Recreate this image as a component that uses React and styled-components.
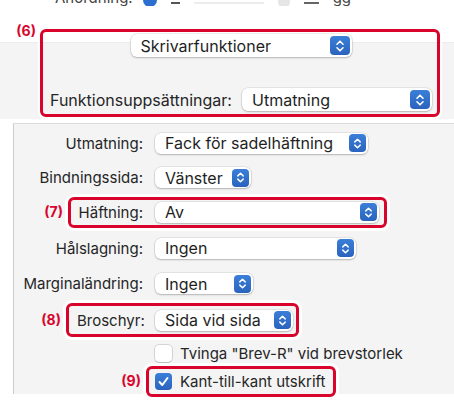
import styled, { createGlobalStyle } from 'styled-components';

const GlobalStyle = createGlobalStyle`
  html, body {
    margin: 0;
    padding: 0;
    background: #ffffff;
  }
  body {
    width: 454px;
    height: 404px;
    overflow: hidden;
    font-family: Inter, "Liberation Sans", sans-serif;
    color: #262626;
  }
`;

const RED = '#d8042c';

function Chevrons ({ size }) {
  return (
    <svg width={size === 'big' ? 10 : 9} height={size === 'big' ? 14 : 13} viewBox="0 0 10 14" fill="none">
      <path d="M2 5.2 L5 2.2 L8 5.2" stroke="#fff" strokeWidth="1.6" strokeLinecap="round" strokeLinejoin="round" />
      <path d="M2 8.8 L5 11.8 L8 8.8" stroke="#fff" strokeWidth="1.6" strokeLinecap="round" strokeLinejoin="round" />
    </svg>
  );
}

function Popup ({ value, width, size, grow }) {
  return (
    <PopupBox $width={width} $size={size} $grow={grow}>
      <PopupText>{value}</PopupText>
      <Stepper $size={size}>
        <Chevrons size={size} />
      </Stepper>
    </PopupBox>
  );
}

function Check ({ checked }) {
  return (
    <CheckBox $checked={checked}>
      {checked && (
        <svg width="13" height="13" viewBox="0 0 13 13" fill="none">
          <path d="M2.5 7 L5.3 10 L10.5 3" stroke="#fff" strokeWidth="2" strokeLinecap="round" strokeLinejoin="round" />
        </svg>
      )}
    </CheckBox>
  );
}

function App () {
  return (
    <Page>
      <GlobalStyle />
      <TopStrip>
        <StripText>Anordning:</StripText>
        <StripRadio />
        <StripIcon $w={9} $c="#555" />
        <StripIcon $w={70} $c="#ececec" />
        <StripDot />
        <StripIcon $w={15} $c="#666" />
        <StripText>gg</StripText>
      </TopStrip>

      <Header>
        <TagCell $w={40} $top>
          <Tag>(6)</Tag>
        </TagCell>
        <TopFrame>
          <CenterRow>
            <Popup value="Skrivarfunktioner" width={221} size="big" />
          </CenterRow>
          <SetRow>
            <SetLabel>Funktionsuppsättningar:</SetLabel>
            <Popup value="Utmatning" size="big" grow />
          </SetRow>
        </TopFrame>
      </Header>

      <Panel>
        <Row $h={38}>
          <Label>Utmatning:</Label>
          <Popup value="Fack för sadelhäftning" width={213} />
        </Row>
        <Row $h={31}>
          <Label>Bindningssida:</Label>
          <Popup value="Vänster" width={96} />
        </Row>
        <Row $h={38}>
          <TagCell $w={54}>
            <Tag>(7)</Tag>
          </TagCell>
          <Frame $pl={6} $pr={5}>
            <Label $w={66}>Häftning:</Label>
            <Popup value="Av" width={224} />
          </Frame>
        </Row>
        <Row $h={34}>
          <Label>Hålslagning:</Label>
          <Popup value="Ingen" width={201} />
        </Row>
        <Row $h={37}>
          <Label>Marginaländring:</Label>
          <Popup value="Ingen" width={98} />
        </Row>
        <Row $h={36}>
          <TagCell $w={52}>
            <Tag>(8)</Tag>
          </TagCell>
          <Frame $pl={8} $pr={3} $tall>
            <Label $w={66}>Broschyr:</Label>
            <Popup value="Sida vid sida" width={138} />
          </Frame>
        </Row>
        <Row $h={31}>
          <Indent $w={141} />
          <CheckLine>
            <Check />
            <CheckText>Tvinga "Brev-R" vid brevstorlek</CheckText>
          </CheckLine>
        </Row>
        <Row $h={24}>
          <TagCell $w={132}>
            <Tag>(9)</Tag>
          </TagCell>
          <Frame $pl={6} $pr={8}>
            <CheckLine>
              <Check checked />
              <CheckText>Kant-till-kant utskrift</CheckText>
            </CheckLine>
          </Frame>
        </Row>
      </Panel>
    </Page>
  );
}

export default App;

const Page = styled.div`
  width: 454px;
  height: 404px;
  display: flex;
  flex-direction: column;
  background: #fff;
`;

const TopStrip = styled.div`
  height: 6px;
  overflow: hidden;
  display: flex;
  align-items: flex-end;
  gap: 14px;
  padding-left: 55px;
`;

const StripText = styled.span`
  font-size: 15px;
  line-height: 18px;
  margin-bottom: -1px;
  color: #444;
`;

const StripRadio = styled.span`
  width: 14px;
  height: 14px;
  flex: none;
  border-radius: 50%;
  background: #2c6fd0;
  margin-bottom: -1px;
  margin-left: -4px;
`;

const StripIcon = styled.span`
  width: ${p => p.$w}px;
  height: 10px;
  flex: none;
  border-bottom: 2px solid ${p => p.$c};
  margin-bottom: 2px;
`;

const StripDot = styled.span`
  width: 12px;
  height: 12px;
  flex: none;
  border-radius: 50%;
  background: #e6e6e6;
  margin-bottom: -2px;
`;

const Header = styled.div`
  display: flex;
  align-items: flex-start;
  padding-top: 23px;
  padding-bottom: 6px;
  background: linear-gradient(
    to bottom,
    #ffffff 0,
    #ffffff 36px,
    #e4e4e4 36px,
    #f4f4f4 37px,
    #f4f4f4 113px,
    #ffffff 113px
  );
`;

const TagCell = styled.div`
  width: ${p => p.$w}px;
  flex: none;
  display: flex;
  justify-content: flex-end;
  padding-right: ${p => (p.$top ? 4 : 5)}px;
  box-sizing: border-box;
  margin-top: ${p => (p.$top ? -6 : 0)}px;
`;

const Tag = styled.span`
  color: ${RED};
  font-size: 14px;
  font-weight: 700;
  line-height: 16px;
`;

const TopFrame = styled.div`
  width: 400px;
  height: 88px;
  box-sizing: border-box;
  border: 3px solid ${RED};
  border-radius: 6px;
  box-shadow: 0 0 0 2px #fff;
  padding: 2px 5px 3px 7px;
  display: flex;
  flex-direction: column;
  justify-content: space-between;
`;

const CenterRow = styled.div`
  display: flex;
  justify-content: center;
`;

const SetRow = styled.div`
  display: flex;
  align-items: center;
  gap: 10px;
`;

const SetLabel = styled.span`
  font-size: 16px;
  white-space: nowrap;
`;

const PopupBox = styled.div`
  box-sizing: border-box;
  width: ${p => (p.$width ? `${p.$width}px` : 'auto')};
  flex: ${p => (p.$grow ? '1' : 'none')};
  height: ${p => (p.$size === 'big' ? 23 : 21)}px;
  background: #fff;
  border-radius: 6px;
  box-shadow: 0 0 0 0.5px rgba(0, 0, 0, 0.12), 0 1px 2px rgba(0, 0, 0, 0.22);
  display: flex;
  align-items: center;
  justify-content: space-between;
  padding: 0 2px 0 10px;
`;

const PopupText = styled.span`
  font-size: 16px;
  color: #1f1f1f;
  white-space: nowrap;
`;

const Stepper = styled.span`
  width: ${p => (p.$size === 'big' ? 20 : 17)}px;
  height: ${p => (p.$size === 'big' ? 19 : 18)}px;
  border-radius: 4px;
  background: linear-gradient(to bottom, #3b7fd8, #2a63bd);
  display: flex;
  align-items: center;
  justify-content: center;
  flex: none;
`;

const Panel = styled.div`
  flex: none;
  height: 270px;
  margin-left: 13px;
  border-top: 1px solid #dcdcdc;
  border-left: 1px solid #cdcdcd;
  background: #f4f4f4;
  display: flex;
  flex-direction: column;
`;

const Row = styled.div`
  height: ${p => p.$h}px;
  flex: none;
  display: flex;
  align-items: center;
`;

const Label = styled.span`
  width: ${p => p.$w || 129}px;
  flex: none;
  margin-right: 12px;
  text-align: right;
  font-size: 15px;
  white-space: nowrap;
`;

const Frame = styled.div`
  display: flex;
  align-items: center;
  height: ${p => (p.$tall ? 34 : 31)}px;
  box-sizing: border-box;
  padding: 0 ${p => p.$pr}px 0 ${p => p.$pl}px;
  border: 3px solid ${RED};
  border-radius: 6px;
  box-shadow: 0 0 0 3px #fff;
  background: #f4f4f4;
`;

const Indent = styled.span`
  width: ${p => p.$w}px;
  flex: none;
`;

const CheckLine = styled.div`
  display: flex;
  align-items: center;
  gap: 8px;
`;

const CheckBox = styled.span`
  width: 17px;
  height: 17px;
  box-sizing: border-box;
  border-radius: 4px;
  flex: none;
  display: flex;
  align-items: center;
  justify-content: center;
  background: ${p => (p.$checked ? 'linear-gradient(to bottom, #3b7fd8, #2a63bd)' : '#fff')};
  box-shadow: ${p => (p.$checked ? 'none' : '0 0 0 0.5px rgba(0,0,0,0.25), 0 1px 1px rgba(0,0,0,0.12)')};
`;

const CheckText = styled.span`
  font-size: 15px;
  white-space: nowrap;
`;
